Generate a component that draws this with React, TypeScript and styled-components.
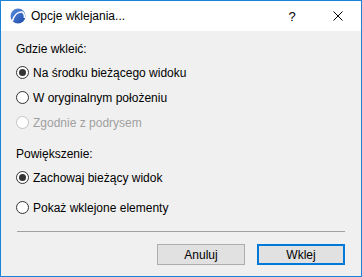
import React from 'react';
import styled, { createGlobalStyle } from 'styled-components';

const Global = createGlobalStyle`
    html, body {
        margin: 0;
        padding: 0;
        background: #ffffff;
    }
    body {
        font-family: 'Liberation Sans', Arial, sans-serif;
        font-size: 12px;
        color: #000000;
    }
`;

const Window = styled.div`
    width: 362px;
    height: 277px;
    box-sizing: border-box;
    border: 1px solid #1883d7;
    display: flex;
    flex-direction: column;
    background: #f0f0f0;
`;

const TitleBar = styled.div`
    height: 30px;
    background: #ffffff;
    display: flex;
    align-items: center;
    padding-left: 9px;
`;

const Title = styled.span`
    margin-left: 5px;
    flex: 1;
    font-size: 12px;
`;

const TitleButton = styled.div<{ $w: number }>`
    width: ${(p) => p.$w}px;
    height: 30px;
    display: flex;
    align-items: center;
    justify-content: center;
    font-size: 13px;
`;

const Body = styled.div`
    flex: 1;
    padding: 8px 16px 0 15px;
    display: flex;
    flex-direction: column;
`;

const GroupLabel = styled.div<{ $top: number }>`
    height: 20px;
    line-height: 20px;
    margin-top: ${(p) => p.$top}px;
`;

const Row = styled.label<{ $top?: number; $disabled?: boolean }>`
    height: 25px;
    margin-top: ${(p) => p.$top ?? 0}px;
    display: flex;
    align-items: center;
    gap: 4px;
    color: ${(p) => (p.$disabled ? '#a0a0a0' : '#000000')};
`;

const Circle = styled.span<{ $checked?: boolean; $disabled?: boolean }>`
    width: 13px;
    height: 13px;
    box-sizing: border-box;
    border-radius: 50%;
    border: 1px solid ${(p) => (p.$disabled ? '#c4c4c4' : '#333333')};
    background: #ffffff;
    display: flex;
    align-items: center;
    justify-content: center;

    &::after {
        content: '';
        width: 7px;
        height: 7px;
        border-radius: 50%;
        background: #333333;
        display: ${(p) => (p.$checked ? 'block' : 'none')};
    }
`;

const Separator = styled.div`
    height: 1px;
    background: #a0a0a0;
    margin-top: 11px;
    margin-left: 1px;
`;

const Buttons = styled.div`
    display: flex;
    justify-content: flex-end;
    gap: 12px;
    margin-top: 12px;
`;

const Button = styled.div<{ $default?: boolean }>`
    width: 88px;
    height: 21px;
    box-sizing: border-box;
    background: #e1e1e1;
    border: ${(p) => (p.$default ? '2px solid #0078d7' : '1px solid #adadad')};
    display: flex;
    align-items: center;
    justify-content: center;
`;

const Radio = ({
    text,
    checked,
    disabled,
    top,
}: {
    text: string;
    checked?: boolean;
    disabled?: boolean;
    top?: number;
}) => (
    <Row $top={top} $disabled={disabled}>
        <Circle $checked={checked} $disabled={disabled} />
        {text}
    </Row>
);

const AppIcon = () => (
    <svg width="16" height="16" viewBox="0 0 16 16">
        <defs>
            <linearGradient id="g" x1="0" y1="0" x2="1" y2="1">
                <stop offset="0" stopColor="#5b8fe0" />
                <stop offset="1" stopColor="#1d47a8" />
            </linearGradient>
        </defs>
        <circle cx="8" cy="8" r="7.5" fill="url(#g)" />
        <path d="M2.5 13 C4 7 8 3.5 12.5 4 C14 5.5 14.8 7.5 14.5 10" fill="none" stroke="#ffffff" strokeWidth="1.6" />
    </svg>
);

const App = () => {
    return (
        <Window>
            <Global />
            <TitleBar>
                <AppIcon />
                <Title>Opcje wklejania...</Title>
                <TitleButton $w={46}>?</TitleButton>
                <TitleButton $w={46}>
                    <svg width="10" height="10" viewBox="0 0 10 10">
                        <path d="M0.5 0.5 L9.5 9.5 M9.5 0.5 L0.5 9.5" stroke="#000000" strokeWidth="1" />
                    </svg>
                </TitleButton>
            </TitleBar>
            <Body>
                <GroupLabel $top={0}>Gdzie wkleić:</GroupLabel>
                <Radio text="Na środku bieżącego widoku" checked top={1} />
                <Radio text="W oryginalnym położeniu" />
                <Radio text="Zgodnie z podrysem" disabled />
                <GroupLabel $top={9}>Powiększenie:</GroupLabel>
                <Radio text="Zachowaj bieżący widok" checked top={1} />
                <Radio text="Pokaż wklejone elementy" top={5} />
                <Separator />
                <Buttons>
                    <Button>Anuluj</Button>
                    <Button $default>Wklej</Button>
                </Buttons>
            </Body>
        </Window>
    );
};

export default App;
